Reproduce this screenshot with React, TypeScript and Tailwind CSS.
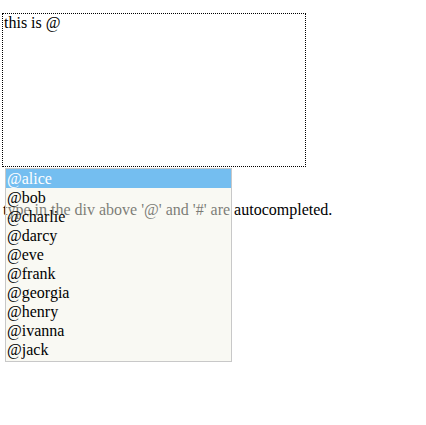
import React from 'react';

const names = ['alice', 'bob', 'charlie', 'darcy', 'eve', 'frank', 'georgia', 'henry', 'ivanna', 'jack'];

const App: React.FC = () => {
  return (
    <div className="relative min-h-[425px] bg-white pl-[2px] pt-[13px] font-['Liberation_Serif',serif] text-[16px] text-black">
      {/* Editable area */}
      <div className="w-[304px] h-[154px] border border-dotted border-black pl-[1px] leading-[18px]">
        this is @
      </div>

      <p className="mt-[34px] pl-[1px] leading-[18px]">
        type in the div above '@' and '#' are autocompleted.
      </p>

      {/* Autocomplete menu */}
      <ul className="absolute left-[5px] top-[168px] w-[227px] h-[194px] border border-[#c8c8c8] bg-[#f4f4e8]/50">
        {names.map((n, i) => (
          <li
            key={n}
            className={
              i === 0
                ? 'h-[19px] leading-[19px] pl-[1px] bg-[#74bef0] text-white'
                : 'h-[19px] leading-[19px] pl-[1px] text-black'
            }
          >
            @{n}
          </li>
        ))}
      </ul>
    </div>
  );
};

export default App;
